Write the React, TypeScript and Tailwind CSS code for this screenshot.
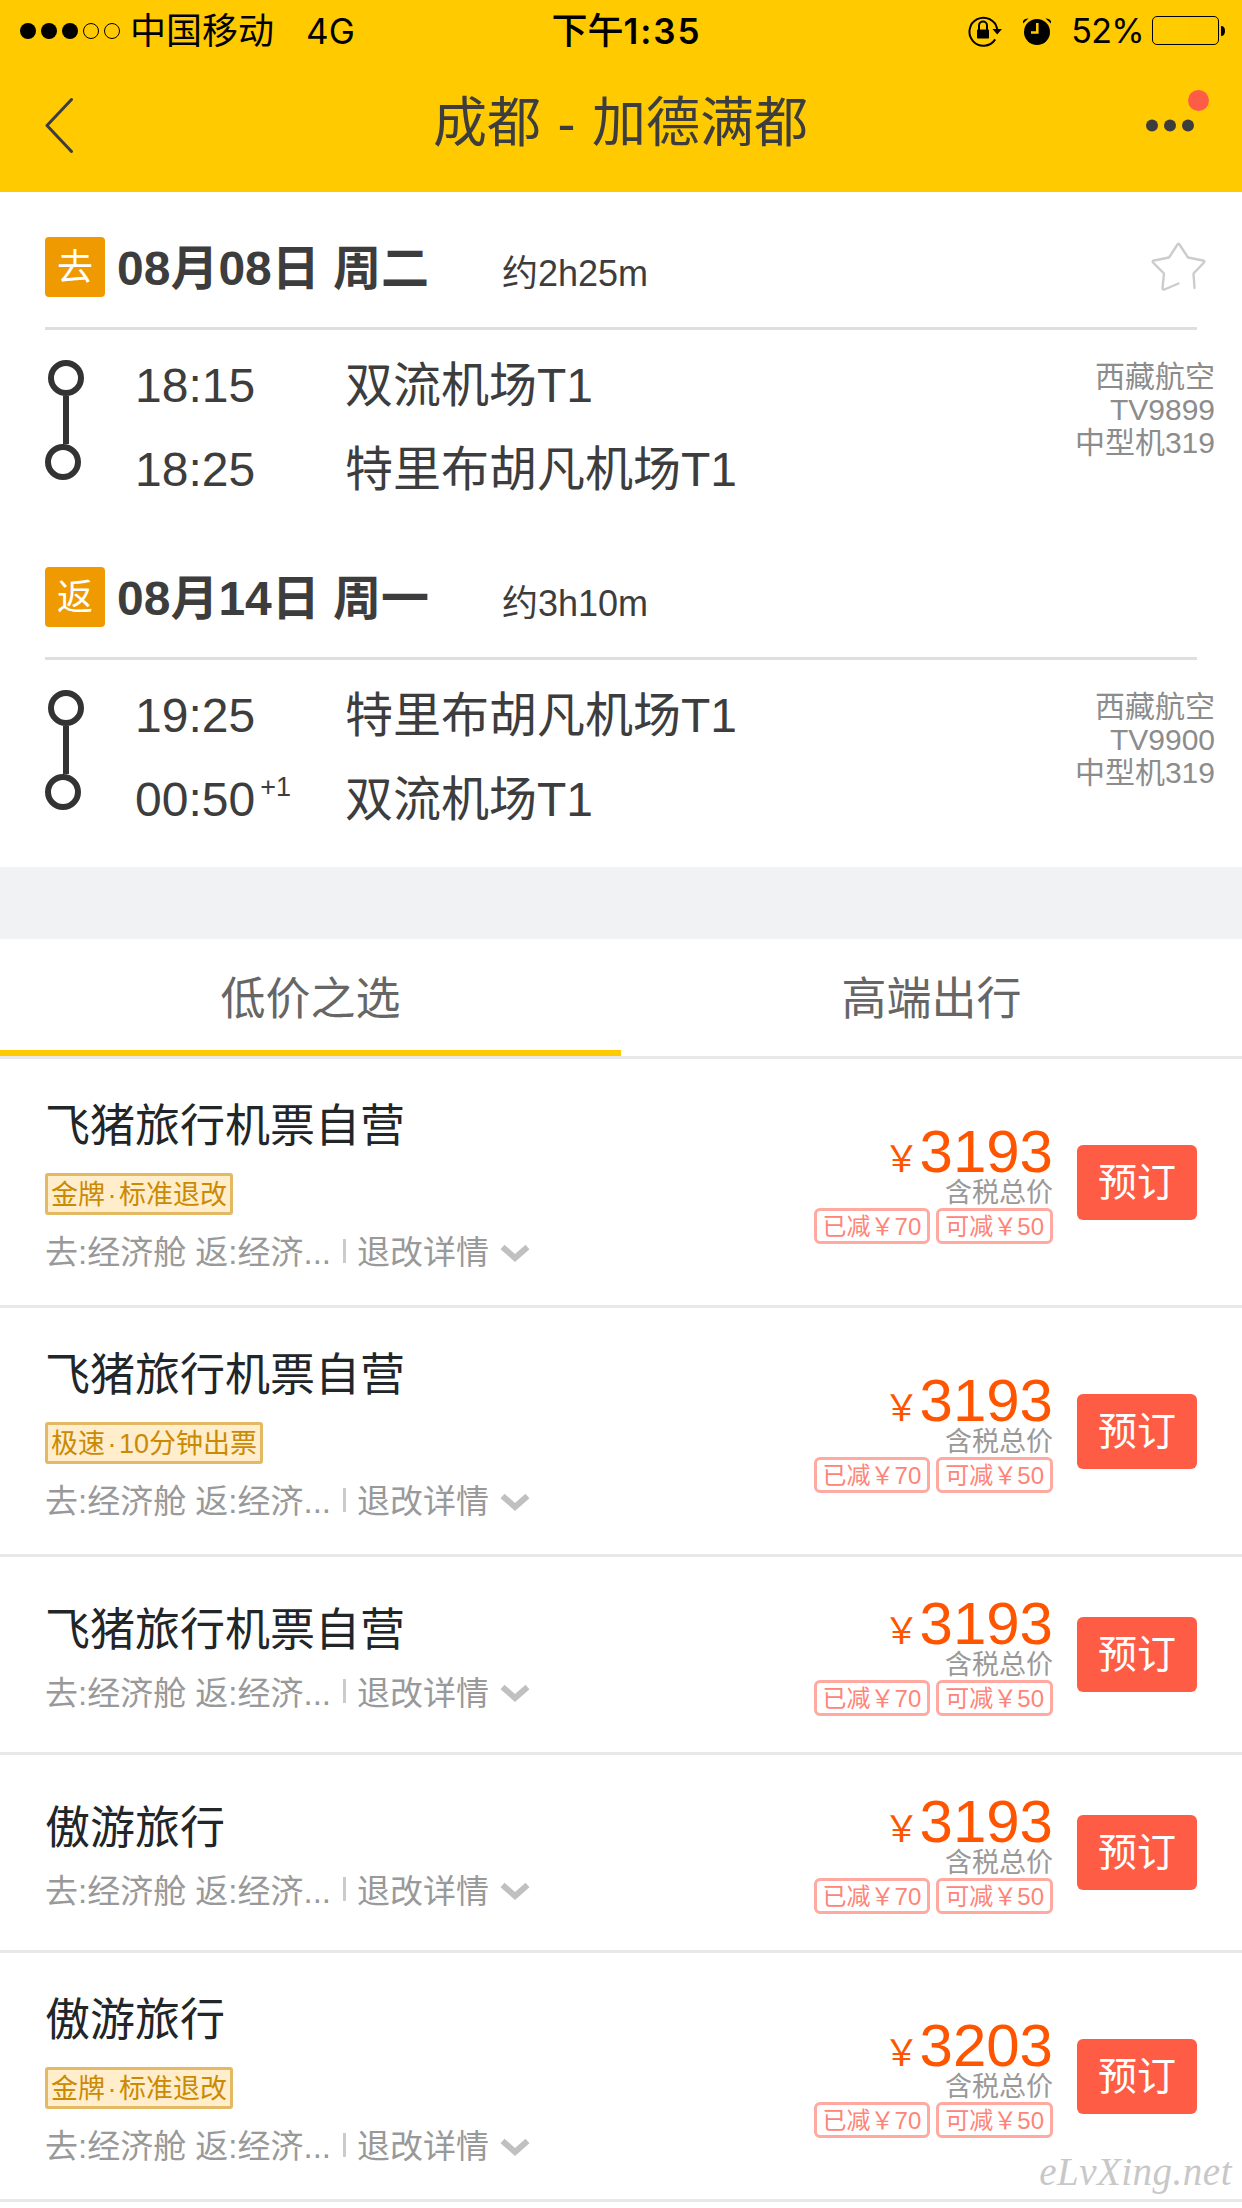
import React, { useState } from 'react';
import clsx from 'clsx';

interface Segment {
  badge: string;
  date: string;
  duration: string;
  depart: { time: string; airport: string };
  arrive: { time: string; airport: string; nextDay?: boolean };
  flightNo: string;
  starred?: boolean;
}

interface Offer {
  agent: string;
  tag?: [string, string];
  price: number;
}

const segments: Segment[] = [
  {
    badge: '去',
    date: '08月08日 周二',
    duration: '约2h25m',
    depart: { time: '18:15', airport: '双流机场T1' },
    arrive: { time: '18:25', airport: '特里布胡凡机场T1' },
    flightNo: 'TV9899',
    starred: true,
  },
  {
    badge: '返',
    date: '08月14日 周一',
    duration: '约3h10m',
    depart: { time: '19:25', airport: '特里布胡凡机场T1' },
    arrive: { time: '00:50', airport: '双流机场T1', nextDay: true },
    flightNo: 'TV9900',
  },
];

const offers: Offer[] = [
  { agent: '飞猪旅行机票自营', tag: ['金牌', '标准退改'], price: 3193 },
  { agent: '飞猪旅行机票自营', tag: ['极速', '10分钟出票'], price: 3193 },
  { agent: '飞猪旅行机票自营', price: 3193 },
  { agent: '傲游旅行', price: 3193 },
  { agent: '傲游旅行', tag: ['金牌', '标准退改'], price: 3203 },
];

const tabs = ['低价之选', '高端出行'];

function StatusBar() {
  return (
    <div className="grid h-[60px] grid-cols-3 items-center pl-5 pr-[17px] font-[Inter,'Noto_Sans_CJK_SC',sans-serif] text-[36px] leading-[60px] text-black">
      <div className="flex items-center">
        <svg className="mr-[9px] h-4 w-[101px]" viewBox="0 0 101 16">
          <circle cx="8" cy="8" r="8" />
          <circle cx="29" cy="8" r="8" />
          <circle cx="50" cy="8" r="8" />
          <circle cx="71" cy="8" r="7.5" fill="none" stroke="#000" />
          <circle cx="92" cy="8" r="7.5" fill="none" stroke="#000" />
        </svg>
        <span className="pt-px">中国移动</span>
        <span className="ml-8 pt-px text-[35px]">4G</span>
      </div>
      <div className="pl-[8px] text-center text-[36px] font-semibold">
        <span className="font-medium">下午</span>
        <span className="text-[35px] tracking-[0.055em]">1:35</span>
      </div>
      <div className="flex items-center justify-end">
        <svg className="mr-5 h-[32px] w-[35px]" viewBox="0 0 35 32">
          <path d="M27.2 24.4 A14 14 0 1 1 29.2 14" fill="none" stroke="#000" strokeWidth="2" />
          <path d="M24.5 14 H34 L29.2 19.5 Z" />
          <rect x="9" y="14.5" width="12" height="9" rx="0.8" />
          <path d="M11 15 V10.5 a4 4 0 0 1 8 0 V15" fill="none" stroke="#000" strokeWidth="2" />
        </svg>
        <svg className="mr-[20px] h-[30px] w-[28px]" viewBox="0 0 28 30">
          <circle cx="14" cy="16" r="13" />
          <path d="M0 7.5 V5 Q1.5 2 5.5 2.5 Z M28 7.5 V5 Q26.5 2 22.5 2.5 Z" />
          <path d="M14.3 7 V16.5 H8" fill="none" stroke="#ffca00" strokeWidth="2.6" />
        </svg>
        <span className="mr-[8px] pt-px text-[34px] tracking-[-0.02em]">52%</span>
        <svg className="h-[29px] w-[73px]" viewBox="0 0 73 29">
          <rect x="0.5" y="0.5" width="66" height="28" rx="4.5" fill="none" stroke="#000" />
          <rect x="3" y="3" width="34" height="23" fill="#ffcc00" />
          <path d="M69 10 Q73 10 73 15 T69 20 Z" />
        </svg>
      </div>
    </div>
  );
}

function NavBar() {
  return (
    <div className="flex h-[132px] items-start justify-between pl-[45px] pr-[32px] text-[#3d3d3d]">
      <svg className="mt-[37px] h-[56px] w-[30px]" viewBox="0 0 30 56" fill="none" stroke="currentColor" strokeWidth="3" strokeLinecap="round" strokeLinejoin="round">
        <path d="M26.5 2.5 L2 28.5 L26.5 54.5" />
      </svg>
      <h1 className="ml-[20px] mt-[23px] text-[54px] leading-[80px] [word-spacing:1.5px]">成都 - 加德满都</h1>
      <svg className="mt-[29px] h-[44px] w-[64px]" viewBox="0 0 64 44" fill="currentColor">
        <circle cx="6" cy="36.5" r="6" />
        <circle cx="24" cy="36.5" r="6" />
        <circle cx="42" cy="36.5" r="6" />
        <circle cx="52.5" cy="11.5" r="10.5" fill="#ff5c48" />
      </svg>
    </div>
  );
}

function RouteLine() {
  return (
    <svg className="h-[120px] w-[39px]" viewBox="0 0 39 120" fill="none" stroke="#333" strokeWidth="6">
      <circle cx="21" cy="18" r="15" />
      <path d="M21 36 V84" />
      <circle cx="18" cy="102" r="15" />
    </svg>
  );
}

function FlightSegment({ segment }: { segment: Segment }) {
  return (
    <section className="h-[330px] pl-[45px] text-[#3d3d3d]">
      <div className="mr-[45px] flex h-[93px] items-start border-b-[3px] border-[#dfdfdf]">
        <span className="h-[60px] w-[60px] rounded-[4px] bg-[#ef9a00] text-center text-[36px] leading-[61px] text-white">
          {segment.badge}
        </span>
        <span className="ml-3 w-[385px] whitespace-nowrap text-[48px] font-bold leading-[64px]">{segment.date}</span>
        <span className="text-[36px] leading-[73px]">{segment.duration}</span>
        {segment.starred && (
          <svg className="-mr-[9px] ml-auto mt-[5px] h-[50px] w-[55px]" viewBox="0 0 55 50" fill="none" stroke="#cccccc" strokeWidth="2.4" strokeLinecap="round" strokeLinejoin="round">
            <path d="M43.5 46 L42.5 31.5 L53 20.5 Q54 19 52 18.500 L37 15.5 L28.5 2.5 Q27.5 1 26.5 2.5 L18 15.5 L3 18.5 Q1 19 2 20.5 L13 31.5 L11.5 46 Q11.5 48 13.5 47.5 L27.5 41.5" />
          </svg>
        )}
      </div>
      <div className="flex">
        <div className="pt-[30px]">
          <RouteLine />
        </div>
        <div className="ml-[51px] w-[210px] pt-[14px] text-[48px] leading-[84px]">
          <div>{segment.depart.time}</div>
          <div className="flex">
            {segment.arrive.time}
            {segment.arrive.nextDay && <span className="ml-[5px] text-[27px] leading-[58px]">+1</span>}
          </div>
        </div>
        <div className="pt-[14px] text-[48px] leading-[84px]">
          <div>{segment.depart.airport}</div>
          <div>{segment.arrive.airport}</div>
        </div>
        <div className="ml-auto mr-[27px] pt-[30px] text-right text-[30px] leading-[33px] text-[#8c8c8c]">
          <div>西藏航空</div>
          <div>{segment.flightNo}</div>
          <div>中型机319</div>
        </div>
      </div>
    </section>
  );
}

function Chip({ label, amount }: { label: string; amount: number }) {
  return (
    <span className="h-9 rounded-[6px] border-[3px] border-[#ffa9a0] px-[6px] text-[24px] leading-[31px] text-[#ff8478]">
      {label}￥{amount}
    </span>
  );
}

function OfferRow({ offer }: { offer: Offer }) {
  return (
    <li
      className={clsx(
        'flex items-center border-b-[3px] border-[#e8e8e8] px-[45px]',
        offer.tag ? 'h-[249px]' : 'h-[198px]'
      )}
    >
      <div className="flex flex-1 flex-col items-start">
        <h2 className={clsx('h-[60px] text-[45px] text-[#222629]', offer.tag ? 'leading-[65px]' : 'leading-[66px]')}>
          {offer.agent}
        </h2>
        {offer.tag && (
          <span className="mt-[19px] flex h-[42px] items-center rounded-[3px] border-[3px] border-[#e4b964] bg-[#ffedcb] px-[3px] pt-[2px] text-[27px] leading-[36px] text-[#ca8a04]">
            {offer.tag[0]}
            <span className="w-[14px] text-center">·</span>
            {offer.tag[1]}
          </span>
        )}
        <div
          className={clsx(
            'flex h-10 items-center text-[33px] leading-[40px] text-[#999]',
            offer.tag ? 'mt-4' : 'mt-[13px]'
          )}
        >
          <span className="pt-[5px]">去:经济舱 返:经济...</span>
          <span className="ml-3 mr-[11px] h-6 w-[3px] bg-[#ccc]" />
          <span className="pt-[5px]">退改详情</span>
          <svg className="ml-[11px] mt-[4px] h-[20px] w-[30px]" viewBox="0 0 30 20" fill="none" stroke="#c0c0c0" strokeWidth="6">
            <path d="M2.5 4 L15 15 L27.5 4" />
          </svg>
        </div>
      </div>

      <div className="mr-6 flex flex-col items-end">
        <div className="flex h-[57px] items-baseline text-[#ff5500]">
          <span className="text-[36px] leading-[61px]">￥</span>
          <span className="text-[60px] leading-[61px]">{offer.price}</span>
        </div>
        <span className="h-[30px] text-[27px] leading-[31px] text-[#999]">含税总价</span>
        <div className="flex gap-[6px]">
          <Chip label="已减" amount={70} />
          <Chip label="可减" amount={50} />
        </div>
      </div>

      <button className="h-[75px] w-[120px] rounded-[6px] bg-[#ff5c45] text-[39px] leading-[73px] text-white">
        预订
      </button>
    </li>
  );
}

function App() {
  const [activeTab, setActiveTab] = useState(0);

  return (
    <div className="relative h-[2208px] w-[1242px] overflow-hidden bg-white font-['Liberation_Sans','Noto_Sans_CJK_SC',sans-serif]">
      <header className="h-[192px] bg-[#ffca00]">
        <StatusBar />
        <NavBar />
      </header>

      <main>
        <div className="h-[675px] pt-[45px]">
          {segments.map((segment) => (
            <FlightSegment key={segment.flightNo} segment={segment} />
          ))}
        </div>

        <div className="h-[72px] bg-[#f1f2f4]" />

        <nav className="flex h-[120px] border-b-[3px] border-[#e8e8e8]">
          {tabs.map((tab, i) => (
            <button
              key={tab}
              onClick={() => setActiveTab(i)}
              className={clsx(
                'flex-1 border-b-[6px] pt-[11px] text-[45px] leading-[100px] text-[#666]',
                i === activeTab ? 'border-[#ffca00]' : 'border-transparent'
              )}
            >
              {tab}
            </button>
          ))}
        </nav>

        <ul>
          {offers.map((offer, i) => (
            <OfferRow key={i} offer={offer} />
          ))}
        </ul>
      </main>

      <div className="absolute bottom-[12px] right-[10px] font-['Liberation_Serif',serif] text-[39px] italic leading-[48px] tracking-[0.5px] text-[#c8c8c8]">
        eLvXing.net
      </div>
    </div>
  );
}

export default App;
